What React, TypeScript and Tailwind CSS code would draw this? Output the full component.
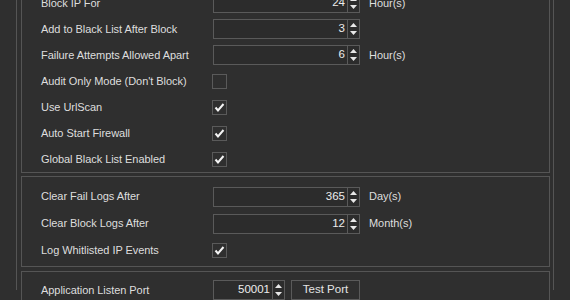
import React from "react";

const font = { fontFamily: '"Liberation Sans", Arial, sans-serif' };

function Arrows() {
  return (
    <div className="flex w-[12px] flex-col items-center justify-center gap-[4px] border-l border-[#5a5a5a]">
      <svg width="7" height="4" viewBox="0 0 7 4">
        <path d="M3.5 0 L7 4 L0 4 Z" fill="#e8e8e8" />
      </svg>
      <svg width="7" height="4" viewBox="0 0 7 4">
        <path d="M0 0 L7 0 L3.5 4 Z" fill="#e8e8e8" />
      </svg>
    </div>
  );
}

function Spin({ value, w = "w-[147px]" }: { value: string; w?: string }) {
  return (
    <div className={`flex h-[20px] ${w} border border-[#5a5a5a] bg-[#2c2c2c]`}>
      <div className="flex flex-1 items-center justify-end pr-[2px] text-[11.5px] text-[#ececec]">{value}</div>
      <Arrows />
    </div>
  );
}

function Check({ on }: { on: boolean }) {
  return (
    <div className="ml-[-1px] flex h-[15px] w-[15px] items-center justify-center border border-[#5a5a5a]">
      {on && (
        <svg width="13" height="13" viewBox="0 0 13 13">
          <path d="M2.5 6.5 L5 9.5 L10.5 3" stroke="#f4f4f4" strokeWidth="2" fill="none" />
        </svg>
      )}
    </div>
  );
}

function Row({ label, children, h = "h-[26px]" }: { label: string; children?: React.ReactNode; h?: string }) {
  return (
    <div className={`flex ${h} items-center`}>
      <div className="w-[172px] shrink-0 text-[11px] tracking-[-0.05px] text-[#dedede]">{label}</div>
      {children}
    </div>
  );
}

function Unit({ t }: { t: string }) {
  return <span className="ml-[9px] text-[11px] tracking-[-0.05px] text-[#dedede]">{t}</span>;
}

export default function App() {
  return (
    <div className="h-[300px] w-[570px] overflow-hidden bg-[#2f2f2f]" style={font}>
      <div className="ml-[16px] h-[300px] w-[538px] border-x border-[#555555] pl-[4px] pr-[3px]">
        <div className="-mt-[10px] border-x border-b border-[#555555] pl-[19px]">
          <Row label="Block IP For">
            <Spin value="24" />
            <Unit t="Hour(s)" />
          </Row>
          <Row label="Add to Black List After Block">
            <Spin value="3" />
          </Row>
          <Row label="Failure Attempts Allowed Apart">
            <Spin value="6" />
            <Unit t="Hour(s)" />
          </Row>
          <Row label="Audit Only Mode (Don't Block)">
            <Check on={false} />
          </Row>
          <Row label="Use UrlScan">
            <Check on />
          </Row>
          <Row label="Auto Start Firewall">
            <Check on />
          </Row>
          <Row label="Global Black List Enabled">
            <Check on />
          </Row>
        </div>
        <div className="mt-[3px] border border-[#555555] pb-[2px] pl-[19px] pt-[6px]">
          <Row label="Clear Fail Logs After" h="h-[27px]">
            <Spin value="365" />
            <Unit t="Day(s)" />
          </Row>
          <Row label="Clear Block Logs After" h="h-[27px]">
            <Spin value="12" />
            <Unit t="Month(s)" />
          </Row>
          <Row label="Log Whitlisted IP Events" h="h-[27px]">
            <Check on />
          </Row>
        </div>
        <div className="mt-[4px] border border-[#555555] pl-[19px] pt-[5px]">
          <Row label="Application Listen Port">
            <Spin value="50001" w="w-[72px]" />
            <button className="ml-[6px] h-[20px] w-[69px] border border-[#5a5a5a] bg-[#2f2f2f] text-[11.5px] text-[#e4e4e4]">
              Test Port
            </button>
          </Row>
          <div className="h-[20px]" />
        </div>
      </div>
    </div>
  );
}
